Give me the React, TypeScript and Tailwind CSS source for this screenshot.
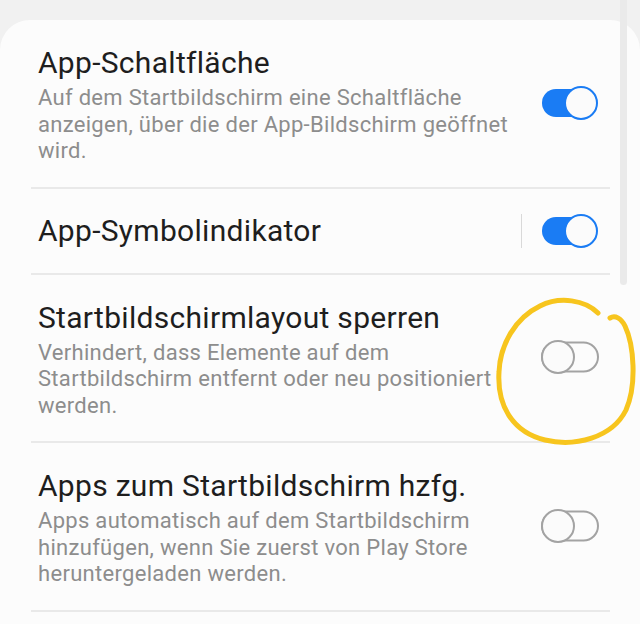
import React from "react";

const font = { fontFamily: "Roboto, 'Noto Sans', sans-serif" };

function Toggle({ on }: { on: boolean }) {
  return (
    <svg width="60" height="36" viewBox="0 0 60 36" className="shrink-0">
      {on ? (
        <>
          <rect x="2" y="4" width="48" height="28" rx="14" fill="#1a7cf4" />
          <circle cx="41" cy="18" r="16" fill="#fbfbfb" stroke="#1a7cf4" strokeWidth="2" />
        </>
      ) : (
        <>
          <rect x="2" y="3.5" width="56" height="29" rx="14.5" fill="none" stroke="#a3a3a3" strokeWidth="2" />
          <circle cx="18" cy="18" r="16" fill="#fbfbfb" stroke="#a3a3a3" strokeWidth="2" />
        </>
      )}
    </svg>
  );
}

function Row({
  title,
  lines,
  on,
  sep,
}: {
  title: string;
  lines?: string[];
  on: boolean;
  sep?: boolean;
}) {
  const hasDesc = lines && lines.length > 0;
  return (
    <div
      className={`flex items-center pl-[7px] pr-[10px] ${
        hasDesc ? "pt-[25px] pb-[22px]" : "h-[84px]"
      }`}
    >
      <div className="flex-1 min-w-0">
        <div className="text-[30px] leading-[36px] text-[#1e1e1e] tracking-[0.3px]">{title}</div>
        {hasDesc && (
          <div className="mt-[4px] text-[22px] leading-[26.5px] text-[#8d8d8d] tracking-[0.3px]">
            {lines!.map((l, i) => (
              <div key={i} className="whitespace-nowrap">
                {l}
              </div>
            ))}
          </div>
        )}
      </div>
      {sep && <div className="w-px h-[34px] bg-[#d9d9d9] mr-[18px]" />}
      <div className={hasDesc ? "-mt-[4px]" : ""}>
        <Toggle on={on} />
      </div>
    </div>
  );
}

function Divider() {
  return <div className="h-[2px] bg-[#e9e9e9]" />;
}

export default function App() {
  return (
    <div className="relative w-[640px] h-[624px] overflow-hidden bg-[#f1f1f1] pt-[20px]" style={font}>
      <div className="h-[640px] bg-[#fcfcfc] rounded-t-[30px] pl-[31px] pr-[30px]">
        <Row
          title="App-Schaltfläche"
          lines={[
            "Auf dem Startbildschirm eine Schaltfläche",
            "anzeigen, über die der App-Bildschirm geöffnet",
            "wird.",
          ]}
          on
        />
        <Divider />
        <Row title="App-Symbolindikator" on sep />
        <Divider />
        <Row
          title="Startbildschirmlayout sperren"
          lines={[
            "Verhindert, dass Elemente auf dem",
            "Startbildschirm entfernt oder neu positioniert",
            "werden.",
          ]}
          on={false}
        />
        <Divider />
        <Row
          title="Apps zum Startbildschirm hzfg."
          lines={[
            "Apps automatisch auf dem Startbildschirm",
            "hinzufügen, wenn Sie zuerst von Play Store",
            "heruntergeladen werden.",
          ]}
          on={false}
        />
        <Divider />
      </div>
      {/* scrollbar */}
      <div className="absolute left-[620px] top-0 w-[7px] h-[285px] bg-[#eaeaea] rounded-b-full" />
      {/* hand-drawn highlight */}
      <svg className="absolute left-0 top-0 pointer-events-none" width="640" height="624">
        <path
          d="M598 313 C 585 300, 560 296, 540 306 C 515 318, 500 345, 499 372 C 497 405, 512 432, 545 440 C 575 447, 612 438, 626 410 C 637 385, 634 345, 625 326 C 621 318, 615 315, 610 318"
          fill="none"
          stroke="#f7c51e"
          strokeWidth="5"
          strokeLinecap="round"
        />
      </svg>
    </div>
  );
}
